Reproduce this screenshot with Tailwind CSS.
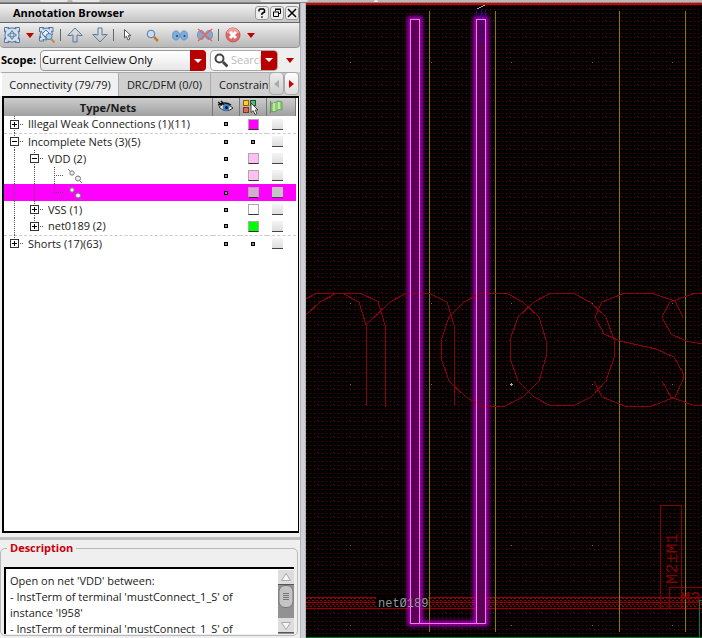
<!DOCTYPE html>
<html lang="en">
<head>
<meta charset="utf-8">
<title>Annotation Browser</title>
<script src="https://cdn.jsdelivr.net/npm/@tailwindcss/browser@4"></script>
</head>
<body class="flex h-screen flex-col overflow-hidden bg-[#efefef] font-['Open_Sans','Noto_Sans',sans-serif] text-[11px] leading-4 text-[#1a1a1a]">
<svg class="hidden">
  <defs>
    <g id="plus"><rect x=".5" y=".5" width="8" height="8" fill="#fff" stroke="#333"/><path d="M2 4.500h5M4.500 2v5" stroke="#000"/></g>
    <g id="minus"><rect x=".5" y=".5" width="8" height="8" fill="#fff" stroke="#333"/><path d="M2 4.500h5" stroke="#000"/></g>
    <g id="link"><path d="M0 1l3 3M11 12l3 3" stroke="#777"/><circle cx="4" cy="5" r="2.200" fill="#eee" stroke="#777"/><circle cx="10" cy="10.500" r="2.500" fill="#eee" stroke="#777"/></g>
    <linearGradient id="arrowFill" x1="0" y1="0" x2="0" y2="1"><stop offset="0" stop-color="#c9dcee"/><stop offset="1" stop-color="#86a9ce"/></linearGradient>
  </defs>
</svg>

<div class="flex h-[3px] shrink-0 border-b border-[#888] bg-[#b9b9b9]">
  <span class="ml-10 h-[2px] w-7 rounded-b bg-[#e6e6e6]"></span>
  <span class="ml-1 h-[2px] w-7 rounded-b bg-[#e6e6e6]"></span>
  <span class="ml-40 h-[2px] w-12 rounded-b bg-[#e0e0e0]"></span>
  <span class="ml-[66px] h-[2px] w-1 rounded-t bg-[#f4f4f4]"></span>
</div>

<div class="flex min-h-0 flex-1">
<aside class="flex w-[300px] shrink-0 flex-col">
  <header class="flex h-5 shrink-0 items-center gap-px border-y border-r border-[#666] bg-linear-to-b from-[#f2f2f2] to-[#c4c4c4] pl-[13px]">
    <h1 class="flex-1 font-bold text-black">Annotation Browser</h1>
    <button aria-label="Help" class="flex h-[14px] w-[14px] items-center justify-center rounded-[3px] border border-[#999] bg-[#eee]"><svg width="10" height="10" fill="none" stroke="#000" stroke-width="1.500"><path d="M2 3.500V2l1-1h3.500l1 1v2L5 5.500V7M5 8.200v1.500"/></svg></button>
    <button aria-label="Float" class="flex h-[14px] w-[14px] items-center justify-center rounded-[3px] border border-[#999] bg-[#eee]"><svg width="10" height="10" fill="none" stroke="#000"><path d="M3.500 3V1.500h5v4H7M3 1h6M1 4h6M1.500 4v4.500h5V4"/></svg></button>
    <button aria-label="Close" class="flex h-[14px] w-[14px] items-center justify-center rounded-[3px] border border-[#999] bg-[#eee]"><svg width="10" height="10" stroke="#000" stroke-width="1.500"><path d="M1 1l8 8M9 1L1 9"/></svg></button>
  </header>

  <div role="toolbar" class="flex h-[25px] shrink-0 items-center rounded-b border-r border-b border-[#999] bg-linear-to-b from-[#efefef] to-[#b8b8b8] pl-1">
    <button aria-label="Fit all" class="w-4"><svg width="16" height="16" fill="#d3e1ee" stroke="#56789d"><path d="M.5 5V.5H5L3.800 2 8 .8 12.200 2 11 .5h4.500V5L14 3.800 15.200 8 14 12.200 15.500 11v4.500H11l1.200-1.500L8 15.200 3.800 14 5 15.500H.5V11L2 12.200.8 8 2 3.800z"/><path fill="#eaf1f7" d="M8 3.500l1.800 2.700L12.500 8 9.800 9.800 8 12.500 6.200 9.800 3.500 8l2.700-1.800z"/><circle cx="8" cy="8" r="2"/></svg></button>
    <button aria-label="Fit options" class="ml-[6px] w-2"><svg width="8" height="5"><path d="M0 0h8L4 5z" fill="#c00000"/></svg></button>
    <button aria-label="Zoom to" class="ml-[5px] w-4"><svg width="16" height="16" fill="#d3e1ee" stroke="#56789d"><path d="M.5 5V.5H5L3.800 2 8 1 11 2 9.500.5H14V5L12.500 4 13.500 8M8 13l-4-.5 1 1.500H.5V9.500L2 11 1 8l1-4z"/><path d="M7 3l3 3-3 4-4-3z" fill="#eaf1f7"/><path d="M12 12l3.500 3.500" stroke="#cd853f" stroke-width="2"/><circle cx="10" cy="9.500" r="3" fill="#a8d0f5"/></svg></button>
    <i class="ml-[5px] h-3 w-px bg-[#666]"></i>
    <button aria-label="Previous" class="ml-[6px] w-4"><svg width="16" height="16"><path d="M8 1l7.200 7.500h-3.500V8H10v7H6V8H4.300v.5H.8z" fill="url(#arrowFill)" stroke="#55799f"/></svg></button>
    <button aria-label="Next" class="ml-[9px] w-4"><svg width="16" height="16"><path d="M8 15L.8 7.500h3.500V8H6V1h4v7h1.700v-.5h3.500z" fill="url(#arrowFill)" stroke="#55799f"/></svg></button>
    <i class="ml-[5px] h-3 w-px bg-[#666]"></i>
    <button aria-label="Select" class="ml-[10px] w-2"><svg width="8" height="12"><path d="M.5.5v8.300l2-1.500L4 11l1.800-.8-1.500-3.500H7z" fill="#fff" stroke="#555"/></svg></button>
    <button aria-label="Zoom" class="ml-[14px] w-[13px]"><svg width="13" height="13"><path d="M8 8l4 4" stroke="#c67a2c" stroke-width="2.500"/><circle cx="5" cy="5" r="3.800" fill="#c4ddf5" stroke="#58779c"/></svg></button>
    <button aria-label="Show" class="ml-[13px] w-4"><svg width="16" height="11" fill="#79addf" stroke="#6a94c0"><ellipse cx="4" cy="5.500" rx="3.500" ry="4.500"/><ellipse cx="12" cy="5.500" rx="3.500" ry="4.500"/><circle cx="5" cy="6" r="1" fill="#345" stroke="none"/><circle cx="12.500" cy="6" r="1" fill="#345" stroke="none"/></svg></button>
    <button aria-label="Hide" class="ml-[9px] w-4"><svg width="16" height="14" fill="#86a9ca" stroke="#7595b8"><ellipse cx="4" cy="7" rx="3.500" ry="4.500"/><ellipse cx="12" cy="7" rx="3.500" ry="4.500"/><path d="M1 1l14 12M15 1L1 13" stroke="#f06060" stroke-width="1.500"/></svg></button>
    <i class="ml-[5px] h-3 w-px bg-[#666]"></i>
    <button aria-label="Delete" class="ml-[6px] w-4"><svg width="16" height="16"><circle cx="8" cy="8" r="7" fill="#e06868" stroke="#c85555"/><path d="M2 6a6 5 0 0 1 12 0z" fill="#efa0a0"/><path d="M5 5l6 6M11 5l-6 6" stroke="#fff" stroke-width="3"/></svg></button>
    <button aria-label="Delete options" class="ml-[6px] w-2"><svg width="8" height="5"><path d="M0 0h8L4 5z" fill="#c00000"/></svg></button>
  </div>

  <div class="flex h-[24px] shrink-0 items-center pl-px">
    <label for="scope" class="w-[39px] font-bold text-black">Scope:</label>
    <div class="relative h-[21px] w-[166px]">
      <select id="scope" class="h-full w-full appearance-none rounded border border-[#999] bg-linear-to-b from-white to-[#e8e8e8] pl-px text-black"><option>Current Cellview Only</option></select>
      <svg class="pointer-events-none absolute top-0 right-0" width="16" height="21"><path d="M0 0h12q4 0 4 4v13q0 4-4 4H0z" fill="#b80000"/><path d="M4 9h8l-4 4z" fill="#fff"/></svg>
    </div>
    <div class="ml-1 flex h-[21px] w-[68px] items-center overflow-hidden rounded border border-[#aaa] bg-white">
      <svg class="ml-[3px] shrink-0" width="14" height="15" fill="none" stroke="#444"><circle cx="5.500" cy="5.500" r="4" stroke-width="2"/><path d="M9 9l4.500 4.500" stroke-width="3"/></svg>
      <input aria-label="Search" placeholder="Search" class="ml-[3px] w-0 min-w-0 flex-1 placeholder:text-[#bbb]">
      <button aria-label="Search options" class="flex h-[21px] w-4 shrink-0 items-center justify-center bg-[#b80000]"><svg width="8" height="4"><path d="M0 0h8L4 4z" fill="#fff"/></svg></button>
    </div>
    <button aria-label="More filters" class="ml-2"><svg width="8" height="5"><path d="M0 0h8L4 5z" fill="#b80000"/></svg></button>
  </div>

  <div role="tablist" class="relative flex h-6 shrink-0 overflow-hidden whitespace-nowrap bg-[#ccc]">
    <button role="tab" aria-selected="true" class="w-[119px] shrink-0 border-t border-r border-l-2 border-[#aaa] border-l-white bg-[#f0f0f0]">Connectivity (79/79)</button>
    <button role="tab" class="w-[92px] shrink-0 border-t border-r border-[#aaa] bg-[#cfcfcf]">DRC/DFM (0/0)</button>
    <button role="tab" class="shrink-0 border-t border-[#aaa] bg-[#cfcfcf] pl-2">Constraints (0)</button>
    <div class="absolute top-0 right-px flex">
      <button aria-label="Scroll tabs left" class="flex h-[23px] w-[15px] items-center justify-center rounded border border-[#aaa] bg-linear-to-b from-[#eee] to-[#ccc]"><svg width="5" height="8"><path d="M5 0v8L0 4z" fill="#aaa"/></svg></button>
      <button aria-label="Scroll tabs right" class="flex h-[23px] w-[15px] items-center justify-center rounded border border-[#aaa] bg-linear-to-b from-[#fff] to-[#ddd]"><svg width="5" height="8"><path d="M0 0v8l5-4z" fill="#d00000"/></svg></button>
    </div>
  </div>

  <div class="mr-px ml-[2px] min-h-0 flex-1 border-2 border-r border-black bg-white pr-[2px]">
    <table class="w-full table-fixed border-collapse">
      <colgroup><col><col class="w-[27px]"><col class="w-[27px]"><col class="w-[29px]"></colgroup>
      <thead>
        <tr class="h-[18px] bg-linear-to-b from-[#cdcdcd] to-[#a0a0a0] leading-none">
          <th class="p-0 font-bold">Type/Nets</th>
          <th class="border-l border-[#777] p-0" aria-label="Visible"><svg class="mx-auto" width="16" height="14"><path d="M1 7q6-6 14 1-7 6-14-1z" fill="#fff" stroke="#222"/><circle cx="8" cy="7.500" r="3.500" fill="#3b82c9"/><circle cx="8.500" cy="7.500" r="1.500" fill="#012"/><path d="M0 2l4 3M3 1l3 3M0 5q7-4 13 0" fill="none" stroke="#111" stroke-width="1.500"/></svg></th>
          <th class="border-l border-[#777] p-0" aria-label="Color"><svg class="ml-[2px]" width="18" height="16"><rect x="1.500" y="1.500" width="5" height="5" fill="#fc3" stroke="#a06000"/><rect x="8.500" y="1.500" width="5" height="5" fill="#5b7" stroke="#175a2c"/><rect x="1.500" y="8.500" width="5" height="5" fill="#d86a50" stroke="#823322"/><path d="M9 4v9.500l2.200-1.800 1.800 3.800 2-.9-1.800-3.600H16z" fill="#fff" stroke="#444"/></svg></th>
          <th class="border-x border-[#777] p-0" aria-label="Flag"><svg class="ml-[2px]" width="15" height="14"><path d="M1.500 1v12" stroke="#777"/><path d="M2 3q3 1 5-1t6 0v8q-4-1-6 1t-5 0z" fill="#8fce77" stroke="#64a653"/><path d="M5 3v8M10 2v7" stroke="#bfe6a9" stroke-width="2"/></svg></th>
        </tr>
      </thead>
      <tbody id="nets"></tbody>
    </table>
  </div>

  <div class="mt-1 h-[3px] shrink-0 border-y border-[#c4c4c4] bg-[#bbb]"></div>
  <fieldset class="mr-[2px] mb-[2px] h-[96px] min-w-0 shrink-0 rounded-[5px] border border-[#b9b9b9] pr-[3px] pl-[3px]">
    <legend class="ml-[3px] px-[3px] leading-4 font-bold text-[#c8000a]">Description</legend>
    <div class="mt-[11px] flex h-[67px] border-t-2 border-l-2 border-black bg-white">
      <textarea readonly aria-label="Description" class="block h-full flex-1 resize-none overflow-hidden pt-[4px] pl-[4px] leading-4 whitespace-pre">Open on net 'VDD' between:
- InstTerm of terminal 'mustConnect_1_S' of
instance 'I958'
- InstTerm of terminal 'mustConnect_1_S' of
instance 'I957'</textarea>
      <svg class="mt-px shrink-0" width="16" height="64">
        <rect width="16" height="64" fill="#929292"/>
        <rect width="16" height="14" fill="#ddd"/><path d="M0 14.500h16" stroke="#555"/><path d="M3.500 10.500h9L8 3.500z" fill="#f6f6f6" stroke="#aaa"/>
        <rect x="1" y="15.500" width="14" height="22" rx="6" fill="#c4c4c4" stroke="#777"/><path d="M5 23.500h6M5 25.500h6M5 27.500h6M5 29.500h6" stroke="#777"/>
        <rect y="48" width="16" height="15" fill="#ddd"/><path d="M0 62.500h16" stroke="#555"/><path d="M3.500 52.500h9L8 59.500z" fill="#f6f6f6" stroke="#aaa"/>
      </svg>
    </div>
  </fieldset>
</aside>

<div class="w-[6px] shrink-0 border-x border-[#b2b3b8] bg-[#d0d1d6]"></div>

<main class="min-w-0 flex-1 bg-black">
<svg class="block h-full w-full" role="img" aria-label="Layout canvas" shape-rendering="crispEdges">
  <defs>
    <pattern id="grid" x="2" y="1" width="4" height="4" patternUnits="userSpaceOnUse"><rect width="1" height="1" fill="#700000"/></pattern>
    <pattern id="major" x="317" y="20" width="16" height="16" patternUnits="userSpaceOnUse"><rect width="1" height="1" fill="#40007c"/></pattern>
    <pattern id="hatch" x="306" y="597" width="4" height="4" patternUnits="userSpaceOnUse"><path d="M0 1h2v1H0zM2 3h2v1H2z" fill="#980000"/></pattern>
    <filter id="glow" x="-20%" y="-5%" width="140%" height="110%"><feGaussianBlur stdDeviation="2"/></filter>
  </defs>
  <g transform="translate(-306 -3)">
    <rect x="306" y="3" width="100%" height="100%" fill="url(#grid)"/>
    <rect x="306" y="3" width="100%" height="100%" fill="url(#major)"/>
    <rect x="306" y="3" width="100%" height="2" fill="#d00000"/>
    <g stroke="#aaa"><path d="M350 62.500h1M431 62.500h1M511 62.500h1M592 62.500h1M672 62.500h1M350 303.500h1M431 303.500h1M511 303.500h1M592 303.500h1M672 303.500h1M350 384.500h1M431 384.500h1M592 384.500h1M672 384.500h1M350 545.500h1M511 545.500h1M592 545.500h1M350 625.500h1M511 625.500h1M592 625.500h1M672 625.500h1" stroke="#666"/><path d="M510 384.500h3M511.500 383v3M477 8.500h2M479 7.500h2M481 6.500h2M483 5.500h2"/></g>
    <rect x="306" y="597" width="100%" height="11" fill="url(#hatch)"/>
    <path d="M306 597.500H900M306 602.500H900M306 608.500H900" stroke="#980000"/>
    <rect x="376" y="596" width="52" height="12" fill="#000"/>
    <path d="M660.500 608V505.500H681.500V608M669.500 608V587.500H702" fill="none" stroke="#850000"/>
    <path d="M429.500 11V632M495.500 11V632M619.500 11V632M685.500 11V632" stroke="#808000"/>
    <g class="font-['Liberation_Mono',monospace]" fill="#850000" shape-rendering="auto">
      <text transform="translate(677 584) rotate(-90)" font-size="17">M2±M1</text>
      <text x="680" y="603" font-size="17">M3</text>
    </g>
    <g stroke="#b400c4" stroke-width="6" fill="none" filter="url(#glow)" shape-rendering="auto"><path d="M414.500 623.500H481" stroke-width="5"/><path d="M410.500 19.500h9V623h-9zM476.500 19.500h9V623h-9z"/></g>
    <path d="M410 19h10v604h-10zM476 19h10v604h-10z" fill="#5a005a"/>
    <rect x="410" y="19" width="10" height="604" fill="url(#grid)"/><rect x="476" y="19" width="10" height="604" fill="url(#grid)"/>
    <g fill="none" stroke="#900008">
      <path d="M306 299L316 293.500H361L378 301.500L385 325V407M306 315L320 302L336 293.500M343 293.500L359 302L366 325V405M366 325L390 302L406 293.500H430L447 302L454 325V405"/>
      <path d="M480 293.500L464 302L449 317L441 341V358L449 381L466 397L481 406H505L523 397L539 381L546 357V340L539 317L523 302L507 293.500Z"/>
      <path d="M550 293.500L534 302L518 317L510 340V358L518 381L534 397L550 405.500H574L591 397L606 381L614 358V340L606 317L590 302L574 293.500Z"/>
      <path d="M683 317L675 301L653 293.500H624L602 302L595 317L604 334L620 341L656 349L674 357L683 373V380L675 397L652 406H625L602 397L594 381"/>
      <path d="M702 293.500H694L670 302L662 317L671 334L686 341L702 344M662 381L671 397L694 405.500H702"/>
    </g>
    <path d="M476.500 10v9M481.500 10v28M485.500 10v9M477 38.500h8" stroke="#3800a8" fill="none"/>
    <path d="M410.500 623.500V19.500H419.500V623M476.500 623V19.500H485.500V623.500H410" stroke="#ff70ff" fill="none"/>
    <text x="378" y="607" class="font-['Liberation_Mono',monospace]" font-size="12" fill="#969696">netØ189</text>
    <path d="M306 637.500H900" stroke="#007a20"/><path d="M699.500 637V600.500H702" stroke="#007a50" fill="none"/>
  </g>
</svg>
</main>
</div>

<script>
// Tree rows: depth, label, expander, swatch colour (null = bullet), flags
const rows = [
  {depth: 0, label: 'Illegal Weak Connections (1)(11)', box: 'plus', color: '#ff00ff', first: true, rule: true},
  {depth: 0, label: 'Incomplete Nets (3)(5)', box: 'minus', color: null},
  {depth: 1, label: 'VDD (2)', box: 'minus', color: '#ffbff2', first: true},
  {depth: 2, label: '', color: '#ffbff2'},
  {depth: 2, label: '', color: '#d8a8d0', last: true, selected: true},
  {depth: 1, label: 'VSS (1)', box: 'plus', color: '#ffffff'},
  {depth: 1, label: 'net0189 (2)', box: 'plus', color: '#00ff00', last: true, rule: true},
  {depth: 0, label: 'Shorts (17)(63)', box: 'plus', color: null, last: true},
];
const bullet = '<span class="mx-auto block h-1 w-1 border border-black bg-[#888]"></span>';
document.getElementById('nets').innerHTML = rows.map(r => {
  const x = 10.5 + 20 * r.depth;
  let d = '';
  for (let i = 0; i < r.depth; i++) d += `M${10.5 + 20 * i} 0V17`;
  d += `M${x} 0V${r.last ? 9 : 17}M${x + 1.5} 8.5H${x + 8.5}`;
  const mark = r.box ? `<use href="#${r.box}" x="${x - 4.5}" y="4"/>` : `<use href="#link" x="64" y="1"/>`;
  const width = r.depth === 2 ? 80 : 24 + 20 * r.depth;
  const cell = r.rule ? 'border-b border-dashed border-[#ccc] p-0' : 'p-0';
  const swatch = r.color
    ? `<span class="mx-auto block h-[11px] w-[11px] border border-[#aaa] border-b-[#333]" style="background:${r.color}"></span>` : bullet;
  return `<tr class="h-[17px] ${r.selected ? 'bg-[#ff00ff]' : ''}">
    <td class="${cell}"><div class="flex h-4 items-center whitespace-nowrap"><svg class="h-[17px] shrink-0" width="${width}"><path d="${d}" fill="none" stroke="#555" stroke-dasharray="1 1" shape-rendering="crispEdges"/>${mark}</svg>${r.label}</div></td>
    <td class="${cell}">${bullet}</td>
    <td class="${cell}">${swatch}</td>
    <td class="${cell}"><input type="checkbox" aria-label="Flag ${r.label || 'segment'}" class="ml-[5px] block h-[11px] w-[11px] appearance-none border-b border-[#444] ${r.selected ? 'bg-[#c4c4c4]' : 'bg-linear-to-b from-[#f5f5f5] to-[#dedede]'}"></td>
  </tr>`;
}).join('');
</script>
</body>
</html>
